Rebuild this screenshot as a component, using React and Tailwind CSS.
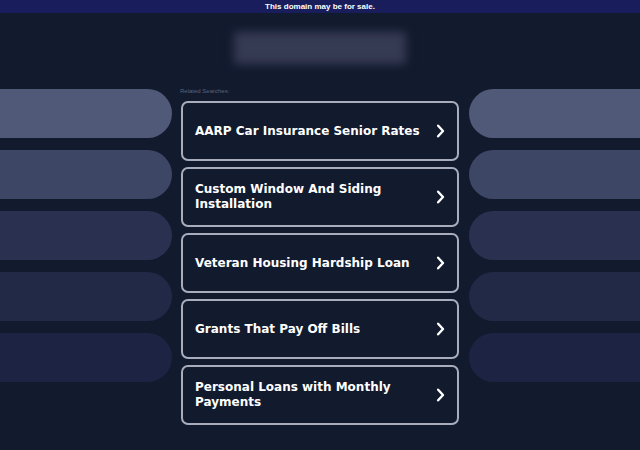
const searches = [
  'AARP Car Insurance Senior Rates',
  'Custom Window And Siding Installation',
  'Veteran Housing Hardship Loan',
  'Grants That Pay Off Bills',
  'Personal Loans with Monthly Payments',
];

const pillColors = ['bg-[#505977]', 'bg-[#3e4665]', 'bg-[#2a3150]', 'bg-[#212947]', 'bg-[#1d2443]'];

function Chevron() {
  return (
    <svg viewBox="0 0 24 24" className="w-[18px] h-[18px] shrink-0" fill="none" stroke="white" strokeWidth="3.2" strokeLinecap="round" strokeLinejoin="round">
      <path d="M9.5 5l6.5 7-6.5 7" />
    </svg>
  );
}

function Pills({ side }) {
  return (
    <div className="flex flex-col gap-[12px] pt-[7px]">
      {pillColors.map((c, i) => (
        <div
          key={i}
          className={`h-[49px] ${c} ${side === 'left' ? 'rounded-r-[25px]' : 'rounded-l-[25px]'}`}
        />
      ))}
    </div>
  );
}

export default function App() {
  return (
    <div className="w-[640px] h-[450px] overflow-hidden bg-[#121a2e] font-['Liberation_Sans',sans-serif]">
      {/* sale banner */}
      <div className="h-[13px] bg-[#191d5b] flex items-center justify-center">
        <span className="text-[8px] font-semibold text-white leading-none">This domain may be for sale.</span>
      </div>

      {/* blurred logo */}
      <div className="h-[69px] flex items-center justify-center">
        <div className="w-[172px] h-[32px] bg-[#363b54] blur-[5px]" />
      </div>

      <div className="flex">
        <div className="w-[172px]">
          <Pills side="left" />
        </div>

        <div className="ml-[8px] w-[280px]">
          <div className="h-[19px] flex items-center text-[6px] text-[#5d6377]">Related Searches:</div>
          <div className="flex flex-col gap-[6px]">
            {searches.map((s) => (
              <div
                key={s}
                className="h-[60px] ml-px w-[278px] border-2 border-[#a9adbb] rounded-[7px] flex items-center justify-between pl-[12px] pr-[8px]"
              >
                <span className="max-w-[236px] font-['DejaVu_Sans',sans-serif] font-bold text-white text-[12px] leading-[15px]">{s}</span>
                <Chevron />
              </div>
            ))}
          </div>
        </div>

        <div className="ml-auto w-[171px]">
          <Pills side="right" />
        </div>
      </div>
    </div>
  );
}
